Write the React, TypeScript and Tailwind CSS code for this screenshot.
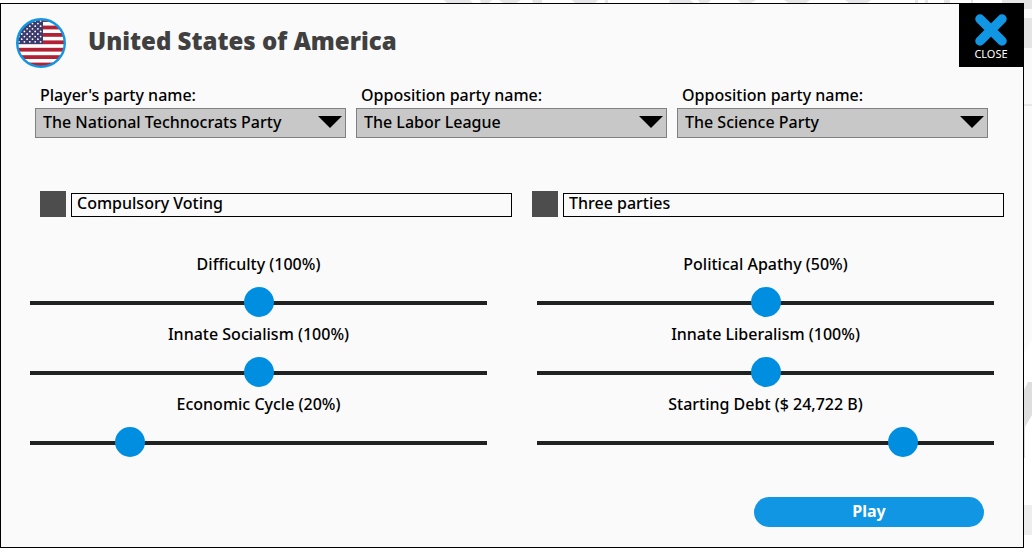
import { useState } from "react";

const PARTIES = ["The National Technocrats Party", "The Labor League", "The Science Party"];

const PARTY_FIELDS = [
  { id: "player-party", label: "Player's party name:", value: PARTIES[0] },
  { id: "opposition-party-1", label: "Opposition party name:", value: PARTIES[1] },
  { id: "opposition-party-2", label: "Opposition party name:", value: PARTIES[2] },
];

const OPTIONS = [
  { id: "compulsory-voting", label: "Compulsory Voting" },
  { id: "three-parties", label: "Three parties" },
];

const percent = (value: number) => `${value}%`;

const SLIDERS = [
  { id: "difficulty", label: "Difficulty", value: 100, max: 200, format: percent },
  { id: "apathy", label: "Political Apathy", value: 50, max: 100, format: percent },
  { id: "socialism", label: "Innate Socialism", value: 100, max: 200, format: percent },
  { id: "liberalism", label: "Innate Liberalism", value: 100, max: 200, format: percent },
  { id: "cycle", label: "Economic Cycle", value: 20, max: 100, format: percent },
  {
    id: "debt",
    label: "Starting Debt",
    value: 24722,
    max: 30075,
    format: (value: number) => `$ ${value.toLocaleString("en-US")} B`,
  },
];

/* Round flag badge: stripes, canton with staggered stars. */
function FlagBadge() {
  return (
    <svg viewBox="0 0 50 50" className="size-[50px] shrink-0" aria-hidden="true">
      <defs>
        <clipPath id="flag-circle">
          <circle cx="25" cy="25" r="24" />
        </clipPath>
      </defs>
      <g clipPath="url(#flag-circle)">
        <rect width="50" height="50" fill="#fff" />
        {Array.from({ length: 7 }, (_, i) => (
          <rect key={i} y={0.2 + i * 7.4} width="50" height="3.8" fill="#b22234" />
        ))}
        <rect width="27" height="26" fill="#3c3b6e" />
        {Array.from({ length: 9 }, (_, row) =>
          Array.from({ length: 5 }, (_, col) => (
            <circle
              key={`${row}-${col}`}
              cx={(row % 2 ? 0.3 : 3) + col * 5.4}
              cy={3 + row * 2.6}
              r="0.9"
              fill="#fff"
            />
          ))
        )}
      </g>
      <circle cx="25" cy="25" r="23.8" fill="none" stroke="#1096e2" strokeWidth="2.4" />
    </svg>
  );
}

/* Faded campaign screen that shows past the edges of the dialog. */
function Backdrop() {
  return (
    <div aria-hidden="true" className="pointer-events-none absolute inset-0 -z-10 overflow-hidden">
      <svg className="absolute top-0 right-0" width="592" height="555" viewBox="440 0 592 555">
        <rect x="1002" y="0" width="30" height="340" fill="#fafafa" />
        <path d="M1024 340h8l-8 14z" fill="#fafafa" />
        <g fill="#e6e6e8">
          <path d="M444 0h26l3 3h-26zM480 0h12l-3 3h-8zM499 0h22l-5 3h-13zM532 0h10v3h-9zM572 0h26l-3 3h-20zM605 0h3v3h-3zM670 0h20l4 3h-25zM698 0h13l-3 3h-8zM738 0h18l-5 3h-10zM784 0h26l-4 3h-18zM845 0h26l-4 3h-18z" />
          <path d="M915 0h3v3h-3zM925 0h3v3h-3zM944 0h6v3h-6zM971 0h2v3h-2z" />
        </g>
        <path d="M1002 0h30v9h-30zM1024 18h8v30h-8z" fill="#e5e5e5" />
        <path d="M1024 104h8v2h-8z" fill="#e8e8e8" />
        <path d="M1028 382h4v33l-7 12v31h-1v-68z" fill="#dedede" />
        <path d="M1024 505h8v30h-8z" fill="#eee" />
      </svg>
    </div>
  );
}

function PartySelect({ id, label, value }: (typeof PARTY_FIELDS)[number]) {
  return (
    <div>
      <label htmlFor={id} className="block pb-[2px] pl-[5px] leading-[22px]">
        {label}
      </label>
      <div className="relative">
        <select
          id={id}
          defaultValue={value}
          className="block h-[30px] w-full appearance-none rounded-none border border-[#808080] bg-[#c8c8c8] pr-8 pb-[2px] pl-[7px]"
        >
          {PARTIES.map((party) => (
            <option key={party}>{party}</option>
          ))}
        </select>
        <svg
          viewBox="0 0 24 12"
          aria-hidden="true"
          className="pointer-events-none absolute top-2 right-1 h-3 w-6"
        >
          <path d="M0 0h24L12 12z" />
        </svg>
      </div>
    </div>
  );
}

function Slider({ id, label, value, max, format }: (typeof SLIDERS)[number]) {
  const [current, setCurrent] = useState(value);

  return (
    <div className="flex h-[70px] flex-col">
      <label htmlFor={id} className="text-center leading-6">
        {label} ({format(current)})
      </label>
      <input
        id={id}
        type="range"
        min={0}
        max={max}
        value={current}
        onChange={(e) => setCurrent(Number(e.target.value))}
        className="mt-3 h-[30px] w-full cursor-pointer appearance-none bg-transparent [&::-webkit-slider-runnable-track]:h-1 [&::-webkit-slider-runnable-track]:bg-[#202222] [&::-webkit-slider-thumb]:-mt-[14px] [&::-webkit-slider-thumb]:size-[30px] [&::-webkit-slider-thumb]:appearance-none [&::-webkit-slider-thumb]:rounded-full [&::-webkit-slider-thumb]:bg-[#008fe0]"
      />
    </div>
  );
}

export default function App() {
  return (
    <div className="relative isolate min-h-screen bg-white pt-[3px] pr-2 font-['Noto_Sans',sans-serif] text-base font-medium text-black">
      <Backdrop />
      <main className="border border-black bg-[#fafafa] pb-5">
        <header className="flex justify-between">
          <div className="flex gap-[22px] pt-[14px] pl-[15px]">
            <FlagBadge />
            <h1 className="text-2xl leading-[46px] font-black text-[#404040]">United States of America</h1>
          </div>
          <button type="button" className="flex h-[63px] w-16 flex-col items-center bg-black pt-[10px] text-white">
            <svg viewBox="0 0 32 32" className="size-8" aria-hidden="true">
              <path d="M5 5l22 22M27 5l-22 22" stroke="#1096e2" strokeWidth="9.5" strokeLinecap="round" />
            </svg>
            <span className="text-[11px] leading-4 font-normal">CLOSE</span>
          </button>
        </header>

        <div className="grid grid-cols-3 gap-[10px] pt-4 pr-[35px] pl-[34px]">
          {PARTY_FIELDS.map((field) => (
            <PartySelect key={field.id} {...field} />
          ))}
        </div>

        <div className="grid grid-cols-2 gap-5 pt-[53px] pr-[19px] pl-[39px]">
          {OPTIONS.map((option) => (
            <div key={option.id} className="flex items-end gap-[5px]">
              <input
                id={option.id}
                type="checkbox"
                className="size-[26px] shrink-0 appearance-none bg-[#4d4d4d] checked:bg-[#1096e2]"
              />
              <label htmlFor={option.id} className="h-6 flex-1 border border-black pl-[5px] leading-[18px]">
                {option.label}
              </label>
            </div>
          ))}
        </div>

        <div className="grid grid-cols-2 gap-x-[50px] pt-[35px] pr-[29px] pl-[29px]">
          {SLIDERS.map((slider) => (
            <Slider key={slider.id} {...slider} />
          ))}
        </div>

        <div className="flex justify-end pt-[35px] pr-[39px]">
          <button type="button" className="h-[30px] w-[230px] rounded-full bg-[#1096e2] pb-[2px] font-bold text-white">
            Play
          </button>
        </div>
      </main>
    </div>
  );
}
